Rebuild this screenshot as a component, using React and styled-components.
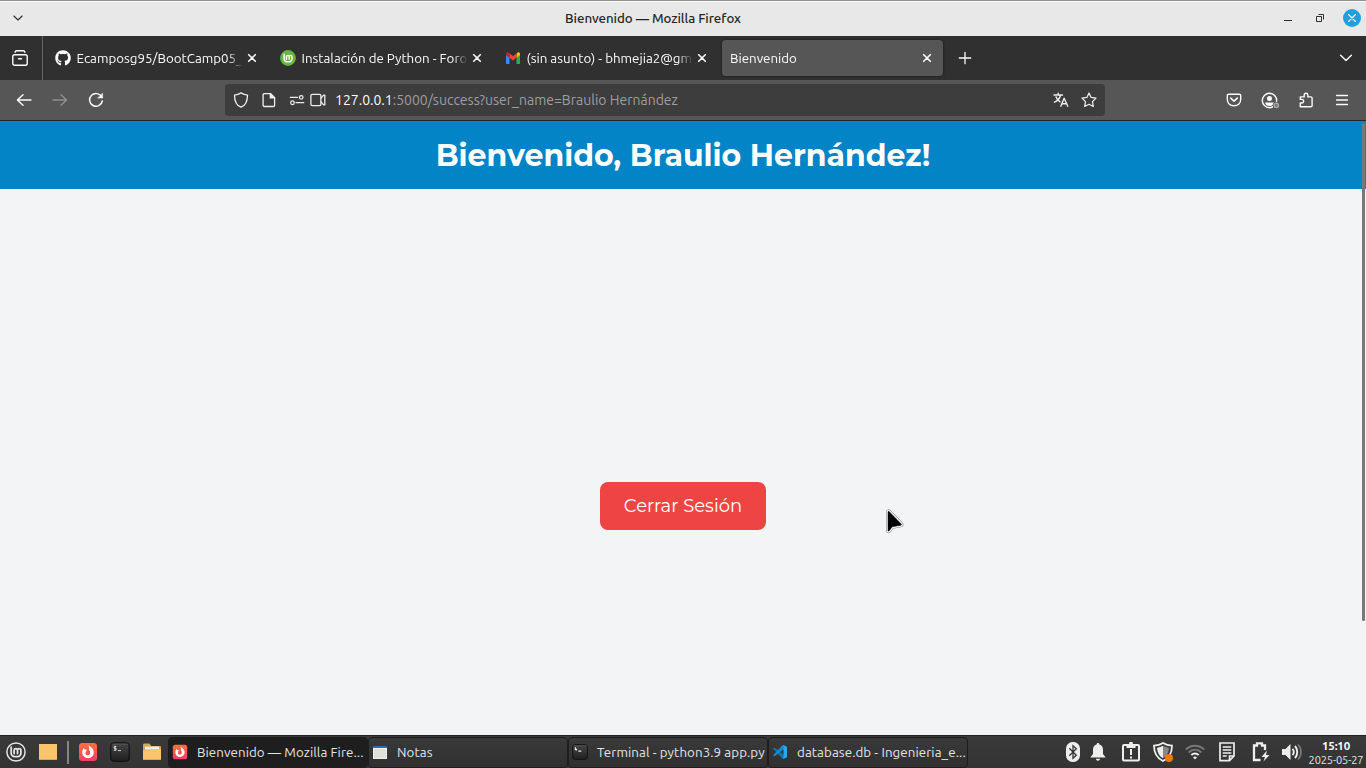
import React from 'react';
import styled, { createGlobalStyle, css } from 'styled-components';
import { FaGithub } from 'react-icons/fa';

const GlobalStyle = createGlobalStyle`
  * { box-sizing: border-box; }
  svg { flex: none; }
  body { margin: 0; overflow: hidden; font-family: Ubuntu, "Noto Sans", "Open Sans", sans-serif; font-size: 13.33px; }
`;

const Screen = styled.div`
  width: 1366px;
  height: 768px;
  display: flex;
  flex-direction: column;
  overflow: hidden;
`;

const TitleBar = styled.header`
  height: 36px;
  flex: none;
  display: grid;
  grid-template-columns: 36px 1236px 32px 32px 32px;
  align-items: center;
  justify-items: center;
  padding-bottom: 1px;
  background: #e8e8e8;
  border-top: 1px solid #929295;
  box-shadow: inset 0 1px 0 #fafafa;
  color: #303030;
`;

const WindowTitle = styled.div`
  margin-right: 2px;
  font-weight: 500;
  letter-spacing: -0.07px;
  color: #262626;
`;

const CloseWindow = styled.div`
  width: 18px;
  height: 18px;
  border-radius: 50%;
  background: #209fdf;
  color: #fff;
  display: flex;
  align-items: center;
  justify-content: center;
`;

const TabBar = styled.nav`
  height: 44px;
  flex: none;
  display: flex;
  align-items: center;
  background: #303030;
  color: #fbfbfe;
`;

const ArchiveButton = styled.div`
  width: 43px;
  height: 44px;
  padding-left: 12px;
  display: flex;
  align-items: center;
  border-right: 1px solid #626262;
  margin-right: 4px;
`;

const Tab = styled.div`
  width: 221px;
  height: 36px;
  margin-right: 4px;
  padding: 0 8px;
  display: flex;
  align-items: center;
  border-radius: 4px;
  ${(p) => p.$active && css`
    background: #565656;
    box-shadow: 0 0 3px rgba(0, 0, 0, 0.5);
  `}
`;

const TabIcon = styled.div`
  width: 16px;
  height: 16px;
  margin-right: 5.5px;
  flex: none;
  display: flex;
`;

const TabLabel = styled.div`
  flex: 1;
  min-width: 0;
  overflow: hidden;
  white-space: nowrap;
  line-height: 20px;
  padding-top: 1px;
  mask-image: linear-gradient(to left, transparent 1px, #000 16px);
`;

const Slot = styled.div`
  width: ${(p) => p.$w}px;
  height: 100%;
  flex: none;
  display: flex;
  align-items: center;
  justify-content: center;
`;

const Spacer = styled.div`
  flex: 1;
`;

const Toolbar = styled.div`
  height: 41px;
  flex: none;
  display: flex;
  align-items: center;
  padding: 0 6px;
  background: #565656;
  border-bottom: 1px solid #252525;
  color: #fbfbfe;
`;

const AddressBar = styled.div`
  width: 880px;
  height: 32px;
  margin-left: 111px;
  padding: 0 2px;
  display: flex;
  align-items: center;
  border-radius: 4px;
  background: #3d3d3d;
  color: #eeeef0;
`;

const Address = styled.div`
  font-size: 14px;
  white-space: nowrap;
  margin-left: 10px;
  color: #9d9da0;
  b { font-weight: 400; color: #fbfbfe; }
`;

const Page = styled.main`
  flex: 1;
  position: relative;
  display: flex;
  flex-direction: column;
  background: #f3f4f6;
  font-family: Montserrat, Inter, sans-serif;
`;

const Banner = styled.div`
  height: 68px;
  flex: none;
  display: flex;
  align-items: center;
  justify-content: center;
  background: #0284c7;
`;

const Heading = styled.h1`
  margin: 0;
  font-size: 30px;
  font-weight: 700;
  color: #fff;
  white-space: nowrap;
`;

const Content = styled.section`
  flex: 1;
  display: flex;
  justify-content: center;
  align-items: flex-start;
  padding-top: 293px;
`;

const LogoutButton = styled.button`
  width: 166px;
  height: 48px;
  padding: 0;
  border: 0;
  border-radius: 8px;
  background: #ef4444;
  color: #fff;
  font-family: inherit;
  font-size: 18px;
  font-weight: 400;
  white-space: nowrap;
`;

const ScrollThumb = styled.div`
  position: absolute;
  right: 1px;
  top: 2px;
  width: 3px;
  height: 498px;
  border-radius: 2px;
  background: #77787a;
`;

const Pointer = styled.svg`
  position: absolute;
  left: 884px;
  top: 388px;
`;

const Taskbar = styled.footer`
  height: 33px;
  flex: none;
  display: flex;
  align-items: center;
  background: linear-gradient(#3a3a3a, #333);
  border-top: 1px solid #202020;
  color: #e4e4e4;
`;

const Divider = styled.div`
  width: 2px;
  height: 23px;
  margin: 0 3px;
  background: #858585;
`;

const Task = styled.div`
  width: 200px;
  height: 31px;
  padding: 0 3px 0 4px;
  display: flex;
  align-items: center;
  flex: none;
  border-radius: 4px;
  border: 1px solid #1d1d1d;
  background: ${(p) => (p.$active ? '#1e1e1e' : 'linear-gradient(#393939, #303030)')};
`;

const TaskLabel = styled.div`
  margin-left: 10px;
  letter-spacing: 0.08px;
  white-space: nowrap;
`;

const Clock = styled.div`
  width: 58px;
  margin: 1px 0 0 7px;
  text-align: center;
  font-size: 11px;
  line-height: 14px;
  letter-spacing: -0.12px;
  white-space: nowrap;
  b { display: block; font-size: 11.5px; color: #fff; }
`;

const Icon = ({ size = 16, w = 1.3, children }) => (
  <svg width={size} height={size} viewBox="0 0 16 16" fill="none" stroke="currentColor" strokeWidth={w} strokeLinecap="round" strokeLinejoin="round">
    {children}
  </svg>
);

const CloseIcon = () => <Icon w={1.6}><path d="M4.7 4.7l6.6 6.6M11.3 4.7l-6.6 6.6" /></Icon>;

const MintIcon = ({ size, disc, ink }) => (
  <svg width={size} height={size} viewBox="0 0 20 20" fill="none">
    <circle cx="10" cy="10" r="9.1" fill={disc} stroke={disc === 'none' ? ink : disc} strokeWidth="1.5" />
    <path d="M5.2 5.2v6.1a3.3 3.3 0 0 0 3.3 3.3h3.1a3.3 3.3 0 0 0 3.3-3.3V8.4a1.7 1.7 0 0 0-3.4 0v3.1M11.5 8.4a1.7 1.7 0 0 0-3.4 0v3.1" stroke={ink} strokeWidth="1.8" strokeLinecap="round" />
  </svg>
);

const GmailIcon = () => (
  <svg width="16" height="16" viewBox="0 0 16 16">
    <path d="M1 4.5v8.4c0 .6.4 1 1 1h2.5V7z" fill="#4285f4" />
    <path d="M15 4.5v8.4c0 .6-.4 1-1 1h-2.5V7z" fill="#34a853" />
    <path d="M4.5 3.6v4.2L1 5.2V4c0-1.5 1.5-2.1 2.6-1.3z" fill="#c5221f" />
    <path d="M11.5 3.6v4.2L15 5.2V4c0-1.5-1.5-2.1-2.6-1.3z" fill="#fbbc04" />
    <path d="M4.5 3.4L8 6l3.5-2.6v4.4L8 10.4 4.5 7.8z" fill="#ea4335" />
  </svg>
);

const FirefoxIcon = ({ size }) => (
  <svg width={size} height={size} viewBox="0 0 20 20">
    <defs>
      <linearGradient id="fire" x1="0" y1="0" x2="0" y2="1"><stop stopColor="#ff7139" /><stop offset="1" stopColor="#ff3b63" /></linearGradient>
    </defs>
    <rect x="1" y="1" width="18" height="18" rx="3.2" fill="url(#fire)" />
    <path d="M10.4 3.4c2.7 1.3 5.4 3.5 5.4 7a5.8 5.8 0 0 1-11.6.1c0-2 .7-3.4 1.7-4.5l.6 1.5 2.5.2-.9 1.5a2.4 2.4 0 1 0 4.1 1.5c.1-1.5-.6-2-1-2.6.3-1.8-.2-3.4-.8-4.7z" fill="#fff" />
  </svg>
);

const TerminalIcon = ({ size, small }) => (
  <svg width={size} height={size} viewBox="0 0 20 20">
    <defs>
      <linearGradient id="term" x1="0" y1="0" x2="0" y2="1"><stop stopColor="#454545" /><stop offset="1" stopColor="#202020" /></linearGradient>
    </defs>
    <rect x=".8" y=".8" width="18.4" height="18.4" rx="3" fill="url(#term)" stroke="#0b0b0b" />
    <path d="M1.8 2.2h16.4" stroke="#606060" strokeWidth=".7" />
    {small
      ? <path d="M4.2 4.2v3.6M5.7 6v2M8 9h3.6" stroke="#eee" strokeWidth="1.5" />
      : <path d="M6.2 4.5H4.1v1.7h2v1.9H3.8M5.1 3.6v5.4M7.8 8.6h3.2" stroke="#ddd" strokeWidth=".9" fill="none" />}
  </svg>
);

const FolderIcon = () => (
  <svg width="20" height="20" viewBox="0 0 20 20">
    <path d="M1 3c0-.9.6-1.5 1.5-1.5h5L9.3 4H18c.6 0 1 .5 1 1v12c0 .6-.4 1-1 1H2c-.6 0-1-.4-1-1z" fill="#d6a756" />
    <path d="M3 4.6h14v3H3z" fill="#eee" />
    <path d="M1 8.3h7L9.5 7H19v10c0 .6-.4 1-1 1H2c-.6 0-1-.4-1-1z" fill="#f9c56c" />
    <path d="M1.3 17.5h17.4" stroke="#d6a756" />
  </svg>
);

const NotesIcon = () => (
  <svg width="14" height="14" viewBox="0 0 14 14">
    <path d="M0 0h14v14H0z" fill="#f2f2ec" />
    <path d="M1 4h12v9H1z" fill="#dfe2da" />
    <path d="M0 0h14v3H0z" fill="#3269ad" />
    <path d="M0 .5h14" stroke="#173d78" />
  </svg>
);

const CodeIcon = () => (
  <svg width="16" height="16" viewBox="0 0 16 16">
    <path d="M1 4.5L2.5 3.4 12 11v3.6L10.8 15z" fill="#0877b9" />
    <path d="M1 11.2l1.5 1.2L12 5V1.3L10.8 1z" fill="#1688cc" />
    <path d="M10.8.8L15 2.7v10.6l-4.2 1.9c.5-.3.7-.7.7-1.2V2c0-.5-.2-.9-.7-1.2z" fill="#2ba5ef" />
  </svg>
);

const tabs = [
  { label: 'Ecamposg95/BootCamp05_2', icon: <FaGithub size={16} /> },
  { label: 'Instalación de Python - Foros', icon: <MintIcon size={16} disc="#69b53f" ink="#fff" /> },
  { label: '(sin asunto) - bhmejia2@gma', icon: <GmailIcon /> },
  { label: 'Bienvenido', active: true },
];

const tasks = [
  { label: 'Bienvenido — Mozilla Fire...', icon: <FirefoxIcon size={16} />, active: true },
  { label: 'Notas', icon: <NotesIcon /> },
  { label: 'Terminal - python3.9 app.py', icon: <TerminalIcon size={16} small /> },
  { label: 'database.db - Ingenieria_e...', icon: <CodeIcon /> },
];

const arrow = 'M4 3v18.6c0 .8.7.9 1.2.2l3-4 8.6-1.5c.9-.2 1-.8.4-1.3L5.3 2.7C4.7 2.1 4 2.3 4 3z';

export default function App() {
  return (
    <Screen>
      <GlobalStyle />
      <TitleBar>
        <Icon size={12} w={1.5}><path d="M2.5 5.3L8 10.7l5.5-5.4" /></Icon>
        <WindowTitle>Bienvenido — Mozilla Firefox</WindowTitle>
        <svg width="16" height="16" viewBox="0 0 16 16"><path d="M4 10.5h8" stroke="currentColor" /></svg>
        <svg width="16" height="16" viewBox="0 0 16 16" fill="none" stroke="currentColor"><path d="M4.5 6.5h5v5h-5zM6.5 4.5h5v5" /></svg>
        <CloseWindow><Icon size={14} w={1.3}><path d="M4 4l8 8M12 4l-8 8" /></Icon></CloseWindow>
      </TitleBar>

      <TabBar>
        <ArchiveButton>
          <Icon w={1.4}><rect x=".8" y="4.7" width="14.4" height="10.5" rx="1.8" /><path d="M3 2.2c.3-.9.8-1.4 1.6-1.4h6.800c.8 0 1.3.5 1.6 1.4M6.5 8.8h3" /></Icon>
        </ArchiveButton>
        {tabs.map((t) => (
          <Tab key={t.label} $active={t.active}>
            {t.icon && <TabIcon>{t.icon}</TabIcon>}
            <TabLabel>{t.label}</TabLabel>
            <Slot $w={16}><CloseIcon /></Slot>
          </Tab>
        ))}
        <Slot $w={35}><Icon w={1.3}><path d="M8 2.3v11.4M2.3 8h11.4" /></Icon></Slot>
        <Spacer />
        <Slot $w={40}><Icon w={1.4}><path d="M2.6 5.2L8 10.6l5.4-5.4" /></Icon></Slot>
      </TabBar>

      <Toolbar>
        <Slot $w={36}><Icon w={1.4}><path d="M15 8H1.6M7 2.7L1.4 8 7 13.3" /></Icon></Slot>
        <Slot $w={36}><Icon w={1.4}><g stroke="#8f8f90"><path d="M1 8h13.4M9 2.7L14.6 8 9 13.3" /></g></Icon></Slot>
        <Slot $w={36}><Icon w={1.5}><path d="M13.8 5.2A6.4 6.4 0 1 0 14.3 9" /><path d="M14.6 1.4v4.7H9.9z" fill="currentColor" strokeWidth=".5" /></Icon></Slot>
        <AddressBar>
          <Slot $w={28}><Icon w={1.3}><path d="M8 .9c1.9 1.2 4.100 2 6.500 2.300 0 6.100-2 10.200-6.500 12C3.500 13.400 1.500 9.300 1.500 3.200 3.900 2.900 6.100 2.100 8 .9z" /></Icon></Slot>
          <Slot $w={28}><Icon w={1.3}><path d="M3.4 1.6h6.2l4 4v7.6c0 .8-.5 1.3-1.3 1.3H3.4c-.8 0-1.3-.5-1.3-1.3V2.9c0-.8.5-1.3 1.3-1.3z" /><path d="M9.3 1.6v4.3h4.3z" fill="currentColor" /></Icon></Slot>
          <Slot $w={28}><Icon w={1.25}><path d="M1.3 5.3h7.2M7 10.7h7.8" /><circle cx="12.2" cy="5.3" r="1.8" /><circle cx="3.5" cy="10.7" r="1.8" /></Icon></Slot>
          <Slot $w={14}><Icon w={1.3}><rect x=".9" y="2.4" width="10" height="11.2" rx="1.4" /><path d="M11 6.2l2.6-3.1h1.2v9.8h-1.2L11 9.8" /></Icon></Slot>
          <Address><b>127.0.0.1</b>:5000/success?user_name=Braulio Hernández</Address>
          <Spacer />
          <Slot $w={29}><Icon size={16} w={1.4}><path d="M1 3h8.5M5.2 1.3V3M7.5 3c-.6 3-3 5.8-6 7.2M3 4.8c.7 2 2.3 4 4 5M7.8 14.2l3.3-8 3.7 8M8.9 11.8h4.8" /></Icon></Slot>
          <Slot $w={28}><Icon w={1.25}><path d="M8 1l2.1 4.4 4.9.7-3.5 3.5.8 4.9L8 12.2l-4.3 2.3.8-4.9L1 6.1l4.9-.7z" /></Icon></Slot>
        </AddressBar>
        <Spacer />
        <Slot $w={36}><Icon w={1.4}><path d="M2.6 2.3h10.8c.8 0 1.3.5 1.3 1.3v3.7c0 3.8-2.5 6.5-6.7 6.5S1.3 11.1 1.3 7.3V3.6c0-.8.5-1.3 1.3-1.3z" /><path d="M4.7 6.1L8 9.2l3.3-3.1" strokeWidth="1.6" /></Icon></Slot>
        <Slot $w={36}>
          <svg width="19" height="17" viewBox="0 0 19 17" fill="none" stroke="currentColor" strokeWidth="1.4">
            <circle cx="8.5" cy="8.5" r="7.2" />
            <circle cx="8.5" cy="6.5" r="2.5" fill="currentColor" stroke="none" />
            <path d="M4 10.5h9c-.5 2.3-2.1 3.6-4.5 3.6S4.5 12.8 4 10.5z" fill="currentColor" stroke="none" />
            <circle cx="15.3" cy="13.3" r="3.6" fill="#565656" stroke="none" />
            <circle cx="15.3" cy="13.3" r="2.2" stroke="#aaa" fill="#777" />
          </svg>
        </Slot>
        <Slot $w={36}><Icon w={1.4}><path d="M2.3 14.8V11h1.5a1.8 1.8 0 0 0 0-3.6H2.3V4.9h3.9V3a1.8 1.8 0 0 1 3.6 0v1.9h3.1c.7 0 1.2.5 1.2 1.2v7.5c0 .7-.5 1.2-1.2 1.2z" /></Icon></Slot>
        <Slot $w={36}><Icon w={1.3}><path d="M2.5 3.5h11M2.5 8h11M2.5 12.5h11" /></Icon></Slot>
      </Toolbar>

      <Page>
        <Banner><Heading>Bienvenido, Braulio Hernández!</Heading></Banner>
        <Content><LogoutButton>Cerrar Sesión</LogoutButton></Content>
        <ScrollThumb />
        <Pointer width="21" height="26" viewBox="0 0 21 26" strokeLinejoin="round">
          <path d={arrow} stroke="#888" strokeWidth="4" />
          <path d={arrow} stroke="#fff" strokeWidth="2.8" />
          <path d={arrow} fill="#000" stroke="#000" strokeWidth=".5" />
        </Pointer>
      </Page>

      <Taskbar>
        <Slot $w={32}><MintIcon size={20} disc="none" ink="#e4e4e4" /></Slot>
        <Slot $w={32}><svg width="18" height="18"><path d="M0 1h18v16H0z" fill="#f9c56c" /><path d="M0 16.5h18" stroke="#d5a65a" /></svg></Slot>
        <Divider />
        <Slot $w={32}><FirefoxIcon size={20} /></Slot>
        <Slot $w={32}><TerminalIcon size={20} /></Slot>
        <Slot $w={32}><FolderIcon /></Slot>
        {tasks.map((t) => (
          <Task key={t.label} $active={t.active}>
            <Slot $w={14}>{t.icon}</Slot>
            <TaskLabel>{t.label}</TaskLabel>
          </Task>
        ))}
        <Spacer />
        <Slot $w={27}>
          <svg width="16" height="20" viewBox="0 0 16 20"><rect x="1" width="14" height="20" rx="6.5" fill="#eeeeec" /><path d="M4.3 6.2l7 7L8 16.3V3.7l3.3 3.1-7 7" stroke="#333" strokeWidth="1.3" fill="none" /></svg>
        </Slot>
        <Slot $w={24}>
          <svg width="16" height="18" viewBox="0 0 16 18" fill="#eeeeec"><path d="M8 0c.9 0 1.4.6 1.4 1.5C12 2.3 13 4.2 13 7v4l2.7 3.6H.3L3 11V7c0-2.8 1-4.7 3.6-5.5C6.6.6 7.1 0 8 0zM6 15.7h4c0 1.2-.8 2-2 2s-2-.8-2-2z" /></svg>
        </Slot>
        <Slot $w={42}>
          <svg width="18" height="20" viewBox="0 0 18 20" fill="none" stroke="#eeeeec" strokeWidth="2"><rect x="1" y="3" width="16" height="15.6" rx="1" /><path d="M4.5 5h9M9 0v4M7.2 1.2h3.6M9 7v6M9 14.5v2" /></svg>
        </Slot>
        <Slot $w={22}>
          <svg width="22" height="20" viewBox="0 0 22 20"><path d="M11 1c2.7 1.7 5.7 2.5 9 2.7 0 7-2.7 12.2-9 15.3C4.7 15.9 2 10.7 2 3.7 5.3 3.5 8.3 2.7 11 1z" fill="#3b3b3b" stroke="#eeeeec" strokeWidth="1.8" /><path d="M11 3.8c-1.900 1.100-4 1.700-6 1.900.2 4.700 2.200 8.400 6 10.500z" fill="#eeeeec" /><path d="M11 3.8c1.900 1.100 4 1.700 6 1.900-.2 4.700-2.200 8.400-6 10.500z" fill="#888" /><circle cx="17" cy="16" r="4" fill="#f57900" /></svg>
        </Slot>
        <Slot $w={42}>
          <svg width="20" height="18" viewBox="0 0 20 18" fill="none" strokeWidth="2"><path d="M.8 6.6C6 1.4 14 1.4 19.2 6.6M3.6 9.5C7.5 5.8 12.5 5.8 16.4 9.5" stroke="#777" /><path d="M6.3 12.1c2.3-2 5.1-2 7.4 0" stroke="#eeeeec" /><path d="M8 14.3c1.2-1 2.8-1 4 0l-2 2.3z" fill="#eeeeec" /></svg>
        </Slot>
        <Slot $w={22}>
          <svg width="16" height="20" viewBox="0 0 16 20" fill="none" stroke="#eeeeec" strokeWidth="1.7"><path d="M1 1h14v13l-4.500 4.700H1zM10.500 18.500v-4.500H15" /><path d="M3.700 5h8.600M3.700 8h8.600M3.700 11h8.600M3.700 14h4" /></svg>
        </Slot>
        <Slot $w={46}>
          <svg width="18" height="20" viewBox="0 0 18 20" fill="none"><path d="M8.500 18H2V3.500h3V1.300h5v2.200h3V8" stroke="#eeeeec" strokeWidth="2.300" /><path d="M15 8.500L9.500 15h3.500l-1.500 4.500L17.500 13H14z" fill="#eeeeec" /></svg>
        </Slot>
        <Slot $w={16}>
          <svg width="20" height="18" viewBox="0 0 20 18" fill="none"><path d="M0 6h3.500L8.500 1v16l-5-5H0z" fill="#eeeeec" /><path d="M10.500 5.800c1.500 1.800 1.500 4.600 0 6.400M13 3c3 3.300 3 8.700 0 12" stroke="#eeeeec" strokeWidth="1.900" /><path d="M16 1.500c4 4.200 4 10.800 0 15" stroke="#777" strokeWidth="1.700" /></svg>
        </Slot>
        <Clock><b>15:10</b>2025-05-27</Clock>
        <Slot $w={1} />
      </Taskbar>
    </Screen>
  );
}
